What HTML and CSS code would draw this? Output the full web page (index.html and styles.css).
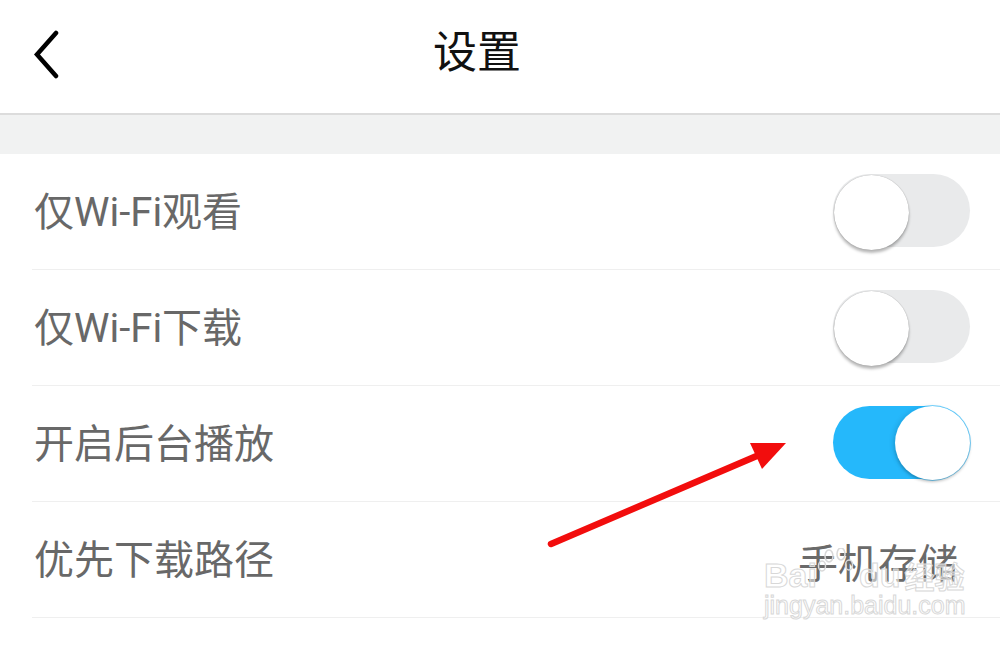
FILE: index.html
```html
<!DOCTYPE html>
<html lang="zh-CN">
<head>
<meta charset="utf-8">
<title>设置</title>
<link rel="stylesheet" href="styles.css">
</head>
<body>
<div class="page">
  <header class="topbar">
    <div class="back">
      <svg width="34" height="50" viewBox="0 0 34 50" aria-hidden="true">
        <path d="M24 3 L5 24.5 L24 46" fill="none" stroke="#000" stroke-width="4.5" stroke-linecap="round" stroke-linejoin="miter"/>
      </svg>
    </div>
    <h1 class="title">设置</h1>
    <div class="spacer"></div>
  </header>
  <div class="band"></div>
  <ul class="list">
    <li class="row">
      <span class="label">仅Wi-Fi观看</span>
      <span class="switch"><span class="knob"></span></span>
    </li>
    <li class="row">
      <span class="label">仅Wi-Fi下载</span>
      <span class="switch"><span class="knob"></span></span>
    </li>
    <li class="row">
      <span class="label">开启后台播放</span>
      <span class="switch on"><span class="knob"></span></span>
    </li>
    <li class="row">
      <span class="label">优先下载路径</span>
      <span class="value">手机存储</span>
    </li>
  </ul>

  <svg class="arrow" width="1000" height="646" viewBox="0 0 1000 646" aria-hidden="true">
    <line x1="551" y1="544" x2="766" y2="452" stroke="#f20d0d" stroke-width="6.5" stroke-linecap="round"/>
    <polygon points="786,443 750,443 762,469" fill="#f20d0d"/>
  </svg>

  <div class="watermark">
    <div class="wm-top"><span>Bai</span><svg class="paw" width="44" height="40" viewBox="0 0 44 40" aria-hidden="true"><g fill="none" stroke="#d8d8d8" stroke-width="1.5"><ellipse cx="12" cy="8" rx="4" ry="6"/><ellipse cx="24" cy="6" rx="4" ry="6"/><ellipse cx="5" cy="18" rx="3.5" ry="5"/><ellipse cx="32" cy="17" rx="3.5" ry="5"/></g></svg><span>du</span><span class="wm-cn">经验</span></div>
    <div class="wm-url">jingyan.baidu.com</div>
  </div>
</div>
</body>
</html>
```

FILE: styles.css
```css
* { box-sizing: border-box; }

html, body {
  margin: 0;
  padding: 0;
  background: #ffffff;
}

.page {
  position: relative;
  width: 1000px;
  height: 646px;
  overflow: hidden;
  font-family: "Roboto", "Noto Sans CJK SC", sans-serif;
}

.topbar {
  height: 115px;
  display: grid;
  grid-template-columns: 100px 1fr 100px;
  align-items: center;
  border-bottom: 2px solid #dcdcdc;
  background: #fff;
}

.back {
  display: flex;
  align-items: center;
  padding-left: 32px;
  padding-bottom: 3px;
}

.back svg { display: block; }

.title {
  margin: 0;
  text-align: center;
  font-family: "Noto Sans CJK SC", sans-serif;
  font-weight: 400;
  font-size: 44px;
  line-height: 1;
  color: #111;
  padding-right: 46px;
  padding-bottom: 16px;
}

.band {
  height: 39px;
  background: #f1f2f2;
}

.list {
  list-style: none;
  margin: 0;
  padding: 0 0 0 32px;
}

.row {
  height: 116px;
  display: flex;
  align-items: center;
  justify-content: space-between;
  border-bottom: 1px solid #efefef;
  padding-left: 2px;
  padding-right: 30px;
}

.label {
  font-size: 40px;
  line-height: 1;
  color: #686868;
  padding-top: 2px;
}

.value {
  font-family: "Noto Sans CJK SC", sans-serif;
  font-size: 40px;
  line-height: 1;
  color: #6a6a6a;
  margin-right: 12px;
  padding-top: 2px;
}

.switch {
  position: relative;
  width: 137px;
  height: 73px;
  border-radius: 37px;
  background: #e9eaeb;
  margin-top: -2px;
}

.switch .knob {
  position: absolute;
  top: 1px;
  left: 1px;
  width: 75px;
  height: 75px;
  border-radius: 50%;
  background: #fff;
  box-shadow: 0 3px 3px rgba(0,0,0,0.28), 0 0 1px rgba(0,0,0,0.35);
}

.switch.on {
  background: #25b8fb;
}

.switch.on .knob {
  left: auto;
  right: 0;
  top: 0;
  width: 75px;
  height: 74px;
  box-shadow: 0 2px 3px rgba(0,0,0,0.22), 0 0 0 1px rgba(37,184,251,0.6), -3px 0 4px rgba(0,0,0,0.08);
}

.arrow {
  position: absolute;
  left: 0;
  top: 0;
  pointer-events: none;
}

.watermark {
  position: absolute;
  left: 764px;
  top: 556px;
  white-space: nowrap;
  pointer-events: none;
  color: rgba(255,255,255,0.5);
  -webkit-text-stroke: 1px #d8d8d8;
  font-family: "Liberation Sans", sans-serif;
}

.wm-top {
  display: flex;
  align-items: flex-end;
  font-size: 34px;
  font-weight: 700;
  line-height: 34px;
  height: 36px;
}

.paw {
  display: block;
  margin: 0 -2px 4px 0;
}

.wm-cn {
  font-family: "Noto Sans CJK SC", sans-serif;
  font-size: 30px;
  margin-left: 4px;
}

.wm-url {
  font-size: 25px;
  line-height: 26px;
  font-weight: 400;
}
```
